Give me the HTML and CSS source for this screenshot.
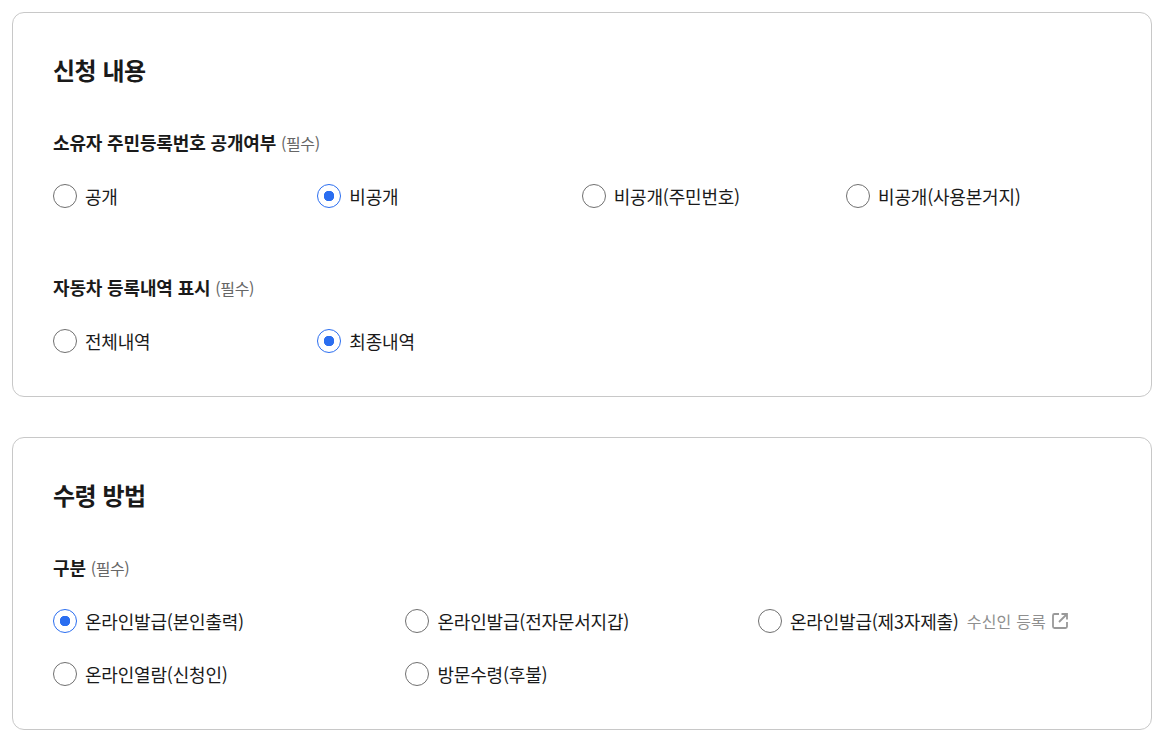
FILE: index.html
```html
<!DOCTYPE html>
<html lang="ko">
  <head>
    <meta charset="utf-8">
    <title>신청 내용</title>
    <link rel="stylesheet" href="styles.css">
  </head>
  <body>
    <section class="card">
      <h2 class="card_title">신청 내용</h2>
      <div class="field">
        <div class="field_label">소유자 주민등록번호 공개여부 <span class="required">(필수)</span></div>
        <div class="options cols_4">
          <label class="option"><span class="radio"></span>공개</label>
          <label class="option"><span class="radio checked"></span>비공개</label>
          <label class="option"><span class="radio"></span>비공개(주민번호)</label>
          <label class="option"><span class="radio"></span>비공개(사용본거지)</label>
        </div>
      </div>
      <div class="field second">
        <div class="field_label">자동차 등록내역 표시 <span class="required">(필수)</span></div>
        <div class="options cols_4">
          <label class="option"><span class="radio"></span>전체내역</label>
          <label class="option"><span class="radio checked"></span>최종내역</label>
        </div>
      </div>
    </section>
    <section class="card">
      <h2 class="card_title">수령 방법</h2>
      <div class="field">
        <div class="field_label">구분 <span class="required">(필수)</span></div>
        <div class="options cols_3">
          <label class="option"><span class="radio checked"></span>온라인발급(본인출력)</label>
          <label class="option"><span class="radio"></span>온라인발급(전자문서지갑)</label>
          <label class="option"><span class="radio"></span>온라인발급(제3자제출)
            <a class="ext_link">수신인 등록
              <svg width="18" height="18" viewBox="0 0 18 18" fill="none" stroke="#999" stroke-width="1.8">
                <path d="M8 2H3.5A1.5 1.5 0 0 0 2 3.5v11A1.5 1.5 0 0 0 3.5 16h11a1.5 1.5 0 0 0 1.5-1.5V10"/>
                <path d="M10.5 2H16v5.5M16 2L8 10"/>
              </svg>
            </a>
          </label>
          <label class="option"><span class="radio"></span>온라인열람(신청인)</label>
          <label class="option"><span class="radio"></span>방문수령(후불)</label>
        </div>
      </div>
    </section>
  </body>
</html>
```

FILE: styles.css
```css
body {
  margin: 0;
  padding: 12px 10px 11px 12px;
  background: #fff;
  color: #1a1a1a;
  font-family: "Noto Sans CJK KR", "Noto Sans", sans-serif;
}

.card {
  padding: 40px 40.6px 38px 40px;
  border: 1px solid #c8c8c8;
  border-radius: 12px;
}

.card + .card {
  margin-top: 40px;
}

.card_title {
  margin: 0 0 42px;
  font-size: 24px;
  line-height: 34px;
  font-weight: 700;
  letter-spacing: -0.5px;
}

.field_label {
  font-size: 18px;
  line-height: 26px;
  font-weight: 700;
  letter-spacing: -0.15px;
}

.required {
  color: #666;
  font-size: 16px;
  font-weight: 400;
  letter-spacing: -0.4px;
}

.second {
  margin-top: 61px;
}

.options {
  display: grid;
  row-gap: 19px;
  margin-top: 23px;
}

.cols_4 {
  grid-template-columns: repeat(4, 1fr);
}

.cols_3 {
  grid-template-columns: repeat(3, 1fr);
}

.option {
  display: flex;
  align-items: center;
  height: 34px;
  font-size: 18px;
  letter-spacing: -0.2px;
  white-space: nowrap;
}

.radio {
  box-sizing: border-box;
  flex: none;
  width: 24px;
  height: 24px;
  margin-right: 8px;
  border: 1px solid #707070;
  border-radius: 50%;
  background: #fff;
}

.radio.checked {
  border-color: #2b6ef0;
  background: radial-gradient(circle, #2b6ef0 0 5px, #fff 5.5px);
}

.ext_link {
  display: inline-flex;
  align-items: center;
  gap: 5px;
  margin-left: 8px;
  color: #8f8f8f;
  font-size: 16px;
  letter-spacing: 0.2px;
}
```
